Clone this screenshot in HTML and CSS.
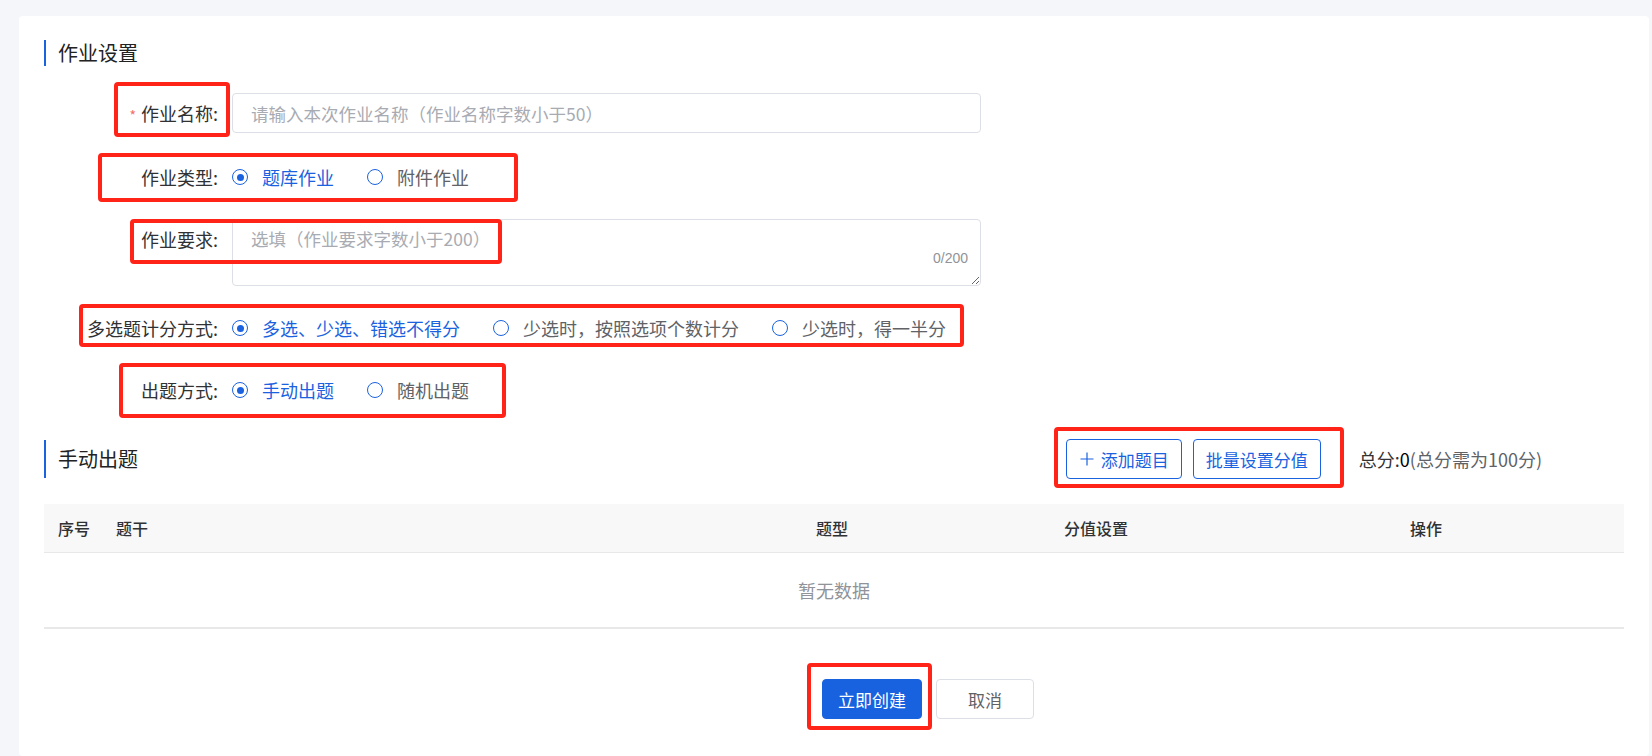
FILE: index.html
```html
<!DOCTYPE html>
<html lang="zh-CN">
<head>
    <meta charset="UTF-8">
    <meta name="viewport" content="width=device-width, initial-scale=1.0">
    <title>作业设置</title>
    <link rel="stylesheet" href="styles.css">
</head>
<body>
  <div class="card">
    <div class="sectionTitle">作业设置</div>

    <div class="form">
      <div class="formItem">
        <label class="formLabel"><span class="required">*</span>作业名称:</label>
        <div class="formControl">
          <input type="text" class="input" placeholder="请输入本次作业名称（作业名称字数小于50）" />
        </div>
      </div>

      <div class="formItem">
        <label class="formLabel">作业类型:</label>
        <div class="formControl radioGroup">
          <label class="radio checked"><span class="dot"></span>题库作业</label>
          <label class="radio"><span class="dot"></span>附件作业</label>
        </div>
      </div>

      <div class="formItem">
        <label class="formLabel">作业要求:</label>
        <div class="formControl textareaWrap">
          <textarea class="textarea" placeholder="选填（作业要求字数小于200）"></textarea>
          <span class="counter">0/200</span>
        </div>
      </div>

      <div class="formItem">
        <label class="formLabel">多选题计分方式:</label>
        <div class="formControl radioGroup">
          <label class="radio checked"><span class="dot"></span>多选、少选、错选不得分</label>
          <label class="radio"><span class="dot"></span>少选时，按照选项个数计分</label>
          <label class="radio"><span class="dot"></span>少选时，得一半分</label>
        </div>
      </div>

      <div class="formItem">
        <label class="formLabel">出题方式:</label>
        <div class="formControl radioGroup">
          <label class="radio checked"><span class="dot"></span>手动出题</label>
          <label class="radio"><span class="dot"></span>随机出题</label>
        </div>
      </div>
    </div>

    <div class="sectionHead">
      <div class="sectionTitle">手动出题</div>
      <div class="tools">
        <button type="button" class="btn btnPlain">
          <svg class="plus" viewBox="0 0 16 16" width="16" height="16"><path d="M8 1.5v13M1.5 8h13" stroke="currentColor" stroke-width="1.2" fill="none"/></svg>
          添加题目
        </button>
        <button type="button" class="btn btnPlain">批量设置分值</button>
        <div class="score">总分:<span class="scoreNum">0</span><span class="scoreHint">(总分需为100分)</span></div>
      </div>
    </div>

    <div class="table">
      <div class="tableHead">
        <div class="cell">序号</div>
        <div class="cell">题干</div>
        <div class="cell center">题型</div>
        <div class="cell center">分值设置</div>
        <div class="cell center">操作</div>
      </div>
      <div class="tableEmpty">暂无数据</div>
    </div>

    <div class="actions">
      <button type="button" class="btn btnPrimary">立即创建</button>
      <button type="button" class="btn btnDefault">取消</button>
    </div>
  </div>

  <!-- annotation frames drawn over the screenshot -->
  <div class="mark markName"></div>
  <div class="mark markType"></div>
  <div class="mark markDesc"></div>
  <div class="mark markMulti"></div>
  <div class="mark markMode"></div>
  <div class="mark markTools"></div>
  <div class="mark markSubmit"></div>
</body>
</html>
```

FILE: styles.css
```css
html, body {
  margin: 0;
  padding: 0;
  height: 756px;
  overflow: hidden;
}
body {
  position: relative;
  background: #f5f6fa;
  font-family: "Noto Sans CJK SC", "Liberation Sans", sans-serif;
  font-size: 18px;
  color: #303133;
  padding: 16px 3px 0 19px;
  box-sizing: border-box;
}
.card {
  background: #fff;
  border-radius: 4px;
  height: 740px;
  padding: 24px 25px 0 25px;
  box-sizing: border-box;
}
.sectionTitle {
  border-left: 2px solid #1a62e0;
  padding-left: 12px;
  height: 26px;
  line-height: 26px;
  font-size: 20px;
  color: #222;
}

/* form */
.form {
  margin-top: 27px;
}
.formItem {
  display: flex;
  margin-bottom: 22px;
}
.formLabel {
  width: 188px;
  flex-shrink: 0;
  box-sizing: border-box;
  padding-right: 14px;
  text-align: right;
  line-height: 40px;
  color: #303133;
}
.required {
  color: #f56c6c;
  font-size: 14px;
  margin-right: 5px;
}
.formControl {
  width: 749px;
}
.input {
  width: 100%;
  height: 40px;
  box-sizing: border-box;
  border: 1px solid #dcdfe6;
  border-radius: 4px;
  padding: 0 18px;
  font: inherit;
  font-size: 17.5px;
  color: #606266;
  outline: none;
}
.input::placeholder,
.textarea::placeholder {
  color: #a8abb2;
}
.textareaWrap {
  position: relative;
}
.textarea {
  display: block;
  width: 100%;
  height: 67px;
  box-sizing: border-box;
  border: 1px solid #dcdfe6;
  border-radius: 4px;
  padding: 7px 18px;
  font: inherit;
  font-size: 17.5px;
  line-height: 24px;
  color: #606266;
  resize: vertical;
  outline: none;
}
.counter {
  position: absolute;
  right: 13px;
  bottom: 18px;
  font-size: 14px;
  line-height: 20px;
  color: #909399;
  font-family: "Liberation Sans", sans-serif;
}

/* radios */
.radioGroup {
  display: flex;
  align-items: center;
  height: 40px;
  width: auto;
}
.radio {
  display: flex;
  align-items: center;
  margin-right: 33px;
  color: #606266;
  white-space: nowrap;
}
.dot {
  width: 16px;
  height: 16px;
  box-sizing: border-box;
  border: 1px solid #1a62e0;
  border-radius: 50%;
  margin-right: 14px;
  position: relative;
}
.radio.checked {
  color: #1a62e0;
}
.radio.checked .dot::after {
  content: "";
  position: absolute;
  left: 3.5px;
  top: 3.5px;
  width: 7px;
  height: 7px;
  border-radius: 50%;
  background: #1a62e0;
}

/* section head */
.sectionHead {
  display: flex;
  align-items: center;
  height: 40px;
  margin-top: 29px;
}
.sectionHead .sectionTitle {
  height: 38px;
  line-height: 38px;
}
.tools {
  margin-left: auto;
  margin-right: 82px;
  display: flex;
  align-items: center;
}
.btn {
  height: 40px;
  box-sizing: border-box;
  border-radius: 4px;
  font: inherit;
  font-size: 17px;
  padding: 0 12px;
  white-space: nowrap;
  cursor: pointer;
  display: flex;
  align-items: center;
  justify-content: center;
}
.btnPlain {
  background: #fff;
  border: 1px solid #1a62e0;
  color: #1a62e0;
  margin-right: 11px;
}
.plus {
  margin-right: 6px;
}
.score {
  margin-left: 27px;
  color: #333;
}
.scoreNum {
  color: #000;
}
.scoreHint {
  color: #606266;
}

/* table */
.table {
  margin-top: 25px;
  border-bottom: 2px solid #e8e8e8;
}
.tableHead {
  display: grid;
  grid-template-columns: 58px 598px 264px 264px 1fr;
  height: 48px;
  align-items: center;
  background: #f8f8f9;
  border-bottom: 1px solid #e8e8e8;
  font-size: 16px;
  font-weight: 500;
  color: #303133;
}
.cell {
  padding-left: 14px;
}
.cell.center {
  padding-left: 0;
  text-align: center;
}
.tableEmpty {
  height: 74px;
  line-height: 74px;
  text-align: center;
  color: #909399;
}

/* bottom buttons */
.actions {
  display: flex;
  justify-content: center;
  padding-left: 188px;
  margin-top: 50px;
  gap: 14px;
}
.btnPrimary {
  width: 100px;
  background: #1862e0;
  border: 1px solid #1862e0;
  color: #fff;
}
.btnDefault {
  width: 98px;
  background: #fff;
  border: 1px solid #dcdfe6;
  color: #606266;
}

/* red annotation frames */
.mark {
  position: absolute;
  border: 4px solid #ff2318;
  border-radius: 4px;
  box-sizing: border-box;
}
.markName   { left: 114px;  top: 82px;  width: 116px; height: 55px; }
.markType   { left: 98px;   top: 153px; width: 420px; height: 49px; }
.markDesc   { left: 130px;  top: 219px; width: 372px; height: 45px; }
.markMulti  { left: 79px;   top: 304px; width: 885px; height: 43px; }
.markMode   { left: 119px;  top: 363px; width: 387px; height: 55px; }
.markTools  { left: 1054px; top: 427px; width: 290px; height: 61px; }
.markSubmit { left: 807px;  top: 663px; width: 125px; height: 67px; }
```
